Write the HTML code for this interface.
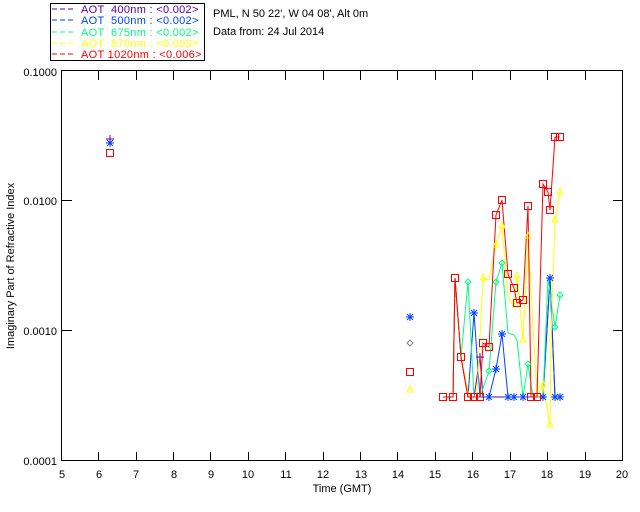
<!DOCTYPE html><html><head><style>body{margin:0;background:#fff}svg{display:block}text{font-family:"Liberation Sans",sans-serif;font-size:11px}</style></head><body>
<svg width="640" height="512" viewBox="0 0 640 512" xmlns="http://www.w3.org/2000/svg">
<defs><path id="ast" d="M-4 0h8M0 -4v8M-3 -3l6 6M3 -3l-6 6"/></defs>
<rect x="50.5" y="3.5" width="154" height="57" fill="none" stroke="#000"/>
<g stroke-dasharray="5,3" stroke-width="1">
<line x1="52" y1="9" x2="74" y2="9" stroke="#6000a0"/>
<line x1="52" y1="20" x2="74" y2="20" stroke="#0040ff"/>
<line x1="52" y1="32" x2="74" y2="32" stroke="#00ff80"/>
<line x1="52" y1="43" x2="74" y2="43" stroke="#ffff00"/>
<line x1="52" y1="54" x2="74" y2="54" stroke="#ff0000"/>
</g>
<g letter-spacing="0.3">
<text x="81" y="13" fill="#6000a0" xml:space="preserve">AOT  400nm : &lt;0.002&gt;</text>
<text x="81" y="24" fill="#0040ff" xml:space="preserve">AOT  500nm : &lt;0.002&gt;</text>
<text x="81" y="36" fill="#00ff80" xml:space="preserve">AOT  675nm : &lt;0.002&gt;</text>
<text x="81" y="47" fill="#ffff00" xml:space="preserve">AOT  870nm : &lt;0.003&gt;</text>
<text x="81" y="58" fill="#ff0000" xml:space="preserve">AOT 1020nm : &lt;0.006&gt;</text>
</g>
<text x="213" y="17">PML, N 50 22', W 04 08', Alt 0m</text>
<text x="213" y="35">Data from: 24 Jul 2014</text>
<g stroke="#000" fill="none">
<rect x="61.5" y="70.5" width="561" height="390"/>
<path d="M98.5 461v-9M136.5 461v-9M173.5 461v-9M210.5 461v-9M248.5 461v-9M285.5 461v-9M323.5 461v-9M360.5 461v-9M397.5 461v-9M435.5 461v-9M472.5 461v-9M510.5 461v-9M547.5 461v-9M585.5 461v-9"/>
<path d="M98.5 71v9M136.5 71v9M173.5 71v9M210.5 71v9M248.5 71v9M285.5 71v9M323.5 71v9M360.5 71v9M397.5 71v9M435.5 71v9M472.5 71v9M510.5 71v9M547.5 71v9M585.5 71v9"/>
<path d="M62 200.5h10M62 330.5h10M613 200.5h10M613 330.5h10"/>
</g>
<g text-anchor="middle">
<text x="62" y="478">5</text><text x="99" y="478">6</text><text x="136" y="478">7</text><text x="174" y="478">8</text><text x="211" y="478">9</text><text x="248" y="478">10</text><text x="286" y="478">11</text><text x="323" y="478">12</text><text x="361" y="478">13</text><text x="398" y="478">14</text><text x="435" y="478">15</text><text x="473" y="478">16</text><text x="510" y="478">17</text><text x="547" y="478">18</text><text x="585" y="478">19</text><text x="622" y="478">20</text>
<text x="342" y="492">Time (GMT)</text>
</g>
<g text-anchor="end"><text x="57" y="76">0.1000</text><text x="57" y="205">0.0100</text><text x="57" y="335">0.0010</text><text x="57" y="465">0.0001</text></g>
<text transform="translate(14 266) rotate(-90)" text-anchor="middle" font-size="10">Imaginary Part of Refractive Index</text>
<g fill="none" stroke-width="1">
<polyline stroke="#6000a0" points="443,397 453,397 455,278 461,357 468,397 474,397 480,357 483,397 489,397 496,397 502,397 508,397 514,397 517,397 523,397 528,397 531,397 537,397 543,397 550,278 555,397 560,397"/>
<polyline stroke="#0040ff" points="443,397 453,397 455,278 461,357 468,397 474,313 480,397 489,397 496,369 502,334 508,397 514,397 517,397 523,397 528,397 531,397 537,397 543,397 550,278 555,397 560,397"/>
<polyline stroke="#00ff80" points="443,397 453,397 455,278 461,357 468,282 474,397 480,397 489,371 496,282 502,263 508,333 514,335 517,340 523,397 528,364 533,397 543,397 548,278 555,327 560,295"/>
<polyline stroke="#ffff00" points="443,397 453,397 455,278 461,357 469,397 477,397 483,278 489,280 496,245 502,226 508,296 514,308 517,276 523,340 528,236 537,397 543,385 550,425 551,342 555,220 560,192"/>
<polyline stroke="#ff0000" points="443,397 453,397 455,278 461,357 468,397 474,397 480,397 483,343 489,347 496,215 502,200 508,274 514,288 517,303 523,300 528,206 531,397 537,397 543,184 548,192 550,210 555,137 560,137"/>
</g>
<g stroke="#0040ff">
<use href="#ast" x="489" y="397"/><use href="#ast" x="508" y="397"/><use href="#ast" x="514" y="397"/><use href="#ast" x="523" y="397"/><use href="#ast" x="543" y="397"/><use href="#ast" x="555" y="397"/><use href="#ast" x="560" y="397"/>
<use href="#ast" x="410" y="317"/><use href="#ast" x="110" y="143"/><use href="#ast" x="474" y="313"/><use href="#ast" x="502" y="334"/><use href="#ast" x="496" y="369"/><use href="#ast" x="550" y="278"/>
</g>
<g fill="none" stroke="#ff0000">
<rect x="439.5" y="393.5" width="7" height="7"/><rect x="449.5" y="393.5" width="7" height="7"/><rect x="451.5" y="274.5" width="7" height="7"/><rect x="457.5" y="353.5" width="7" height="7"/><rect x="464.5" y="393.5" width="7" height="7"/><rect x="470.5" y="393.5" width="7" height="7"/><rect x="476.5" y="393.5" width="7" height="7"/><rect x="479.5" y="339.5" width="7" height="7"/><rect x="485.5" y="343.5" width="7" height="7"/><rect x="492.5" y="211.5" width="7" height="7"/><rect x="498.5" y="196.5" width="7" height="7"/><rect x="504.5" y="270.5" width="7" height="7"/><rect x="510.5" y="284.5" width="7" height="7"/><rect x="513.5" y="299.5" width="7" height="7"/><rect x="519.5" y="296.5" width="7" height="7"/><rect x="524.5" y="202.5" width="7" height="7"/><rect x="527.5" y="393.5" width="7" height="7"/><rect x="533.5" y="393.5" width="7" height="7"/><rect x="539.5" y="180.5" width="7" height="7"/><rect x="544.5" y="188.5" width="7" height="7"/><rect x="546.5" y="206.5" width="7" height="7"/><rect x="551.5" y="133.5" width="7" height="7"/><rect x="556.5" y="133.5" width="7" height="7"/>
<rect x="106.5" y="149.5" width="7" height="7"/><rect x="406.5" y="368.5" width="7" height="7"/>
</g>
<g fill="none" stroke="#ffff00"><path d="M410 386l3 6h-6zM550 421l3 6h-6zM560 188l3 6h-6zM555 216l3 6h-6zM496 241l3 6h-6zM502 222l3 6h-6zM528 232l3 6h-6zM517 272l3 6h-6zM523 336l3 6h-6zM483 274l3 6h-6zM543 381l3 6h-6z"/></g>
<g fill="none" stroke="#00ff80"><path d="M468 279l3 3l-3 3l-3-3zM496 279l3 3l-3 3l-3-3zM502 260l3 3l-3 3l-3-3zM560 292l3 3l-3 3l-3-3zM555 324l3 3l-3 3l-3-3zM528 361l3 3l-3 3l-3-3zM489 368l3 3l-3 3l-3-3z"/></g>
<path d="M410 340l3 3l-3 3l-3-3z" fill="none" stroke="#888"/>
<g stroke="#6000a0"><path d="M106 139h8M110 135v8M476 357h8M480 353v8"/></g>
</svg></body></html>
